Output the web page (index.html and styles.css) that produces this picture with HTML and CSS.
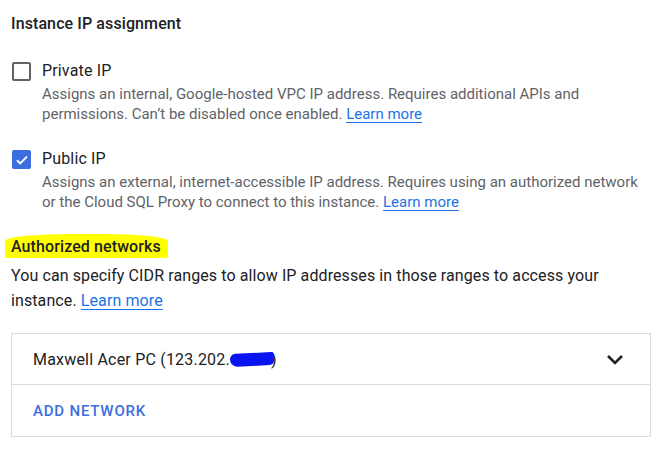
FILE: index.html
```html
<!DOCTYPE html>
<html lang="en">
<head>
<meta charset="utf-8">
<title>Instance IP assignment</title>
<link rel="stylesheet" href="styles.css">
</head>
<body>
<main class="page">
  <h2 class="title">Instance IP assignment</h2>

  <div class="option first">
    <span class="checkbox"></span>
    <div class="option-body">
      <div class="label">Private IP</div>
      <p class="desc">Assigns an internal, Google-hosted VPC IP address. Requires additional APIs and permissions. Can’t be disabled once enabled. <a class="link" href="#">Learn more</a></p>
    </div>
  </div>

  <div class="option second">
    <span class="checkbox checked">
      <svg viewBox="0 0 18 18" width="18" height="18"><path d="M4 9.2l3.2 3.2L14 5.6" fill="none" stroke="#fff" stroke-width="2"/></svg>
    </span>
    <div class="option-body">
      <div class="label">Public IP</div>
      <p class="desc">Assigns an external, internet-accessible IP address. Requires using an authorized network or the Cloud SQL Proxy to connect to this instance. <a class="link" href="#">Learn more</a></p>
    </div>
  </div>

  <h3 class="subtitle"><span class="highlight">Authorized networks</span></h3>
  <p class="para">You can specify CIDR ranges to allow IP addresses in those ranges to access your instance. <a class="link" href="#">Learn more</a></p>

  <div class="networks">
    <div class="net-row">
      <span class="net-name">Maxwell Acer PC (123.202.<span class="redact"></span>)</span>
      <svg class="chevron" viewBox="0 0 18 11" width="18" height="11"><path d="M2 2l7 7 7-7" fill="none" stroke="#202124" stroke-width="2.6"/></svg>
    </div>
    <div class="add-row">
      <a class="add" href="#">ADD NETWORK</a>
    </div>
  </div>
</main>
</body>
</html>
```

FILE: styles.css
```css
html, body {
  margin: 0;
  padding: 0;
  background: #ffffff;
}
body {
  font-family: Roboto, "Noto Sans", Arial, sans-serif;
  color: #202124;
}
.page {
  padding: 14px 17px 0 11px;
  width: 640px;
}
.title {
  margin: 0;
  font-size: 16px;
  line-height: 20px;
  font-weight: 500;
  letter-spacing: 0.1px;
}
.option {
  display: flex;
}
.option.first {
  margin-top: 27px;
}
.option.second {
  margin-top: 25px;
}
.checkbox {
  flex: none;
  box-sizing: border-box;
  width: 19px;
  height: 19px;
  margin: 1px 11px 0 1px;
  border: 2px solid #5f6368;
  border-radius: 2px;
  display: flex;
  align-items: center;
  justify-content: center;
}
.checkbox.checked {
  border: none;
  background: #3b6ee0;
}
.option-body {
  flex: 1;
  min-width: 0;
}
.label {
  font-size: 16px;
  line-height: 20px;
  letter-spacing: 0.15px;
}
.desc {
  margin: 3px 0 0;
  font-size: 15px;
  line-height: 20px;
  letter-spacing: 0;
  color: #5f6368;
}
.link {
  color: #1a73e8;
  text-decoration: underline;
  text-underline-offset: 3px;
}
.subtitle {
  margin: 25px 0 0;
  font-size: 16px;
  line-height: 20px;
  font-weight: 500;
  letter-spacing: 0.1px;
}
.highlight {
  display: inline-block;
  background: #ffff00;
  margin-left: -6px;
  padding: 3px 7px 1px 6px;
  margin-top: -3px;
  margin-bottom: -1px;
  border-radius: 40% 40% 3px 3px / 7px 7px 2px 2px;
}
.para {
  margin: 6px 0 0;
  font-size: 16px;
  line-height: 25px;
  letter-spacing: 0.1px;
}
.networks {
  margin-top: 20px;
  border: 1px solid #dadce0;
}
.net-row {
  height: 50px;
  display: flex;
  align-items: center;
  justify-content: space-between;
  padding: 0 26px 0 21px;
  border-bottom: 1px solid #dadce0;
  font-size: 16px;
  letter-spacing: 0.2px;
}
.net-name {
  display: inline-flex;
  align-items: center;
}
.redact {
  display: inline-block;
  width: 44px;
  height: 13px;
  margin: 0 -3px 0 0;
  background: #0a14f0;
  border-radius: 6px 3px 5px 8px;
  transform: rotate(-3deg);
}
.chevron {
  display: block;
}
.add-row {
  height: 51px;
  display: flex;
  align-items: center;
  padding-left: 21px;
}
.add {
  color: #3b6ee0;
  text-decoration: none;
  font-size: 15px;
  font-weight: 500;
  letter-spacing: 0.8px;
}
```
